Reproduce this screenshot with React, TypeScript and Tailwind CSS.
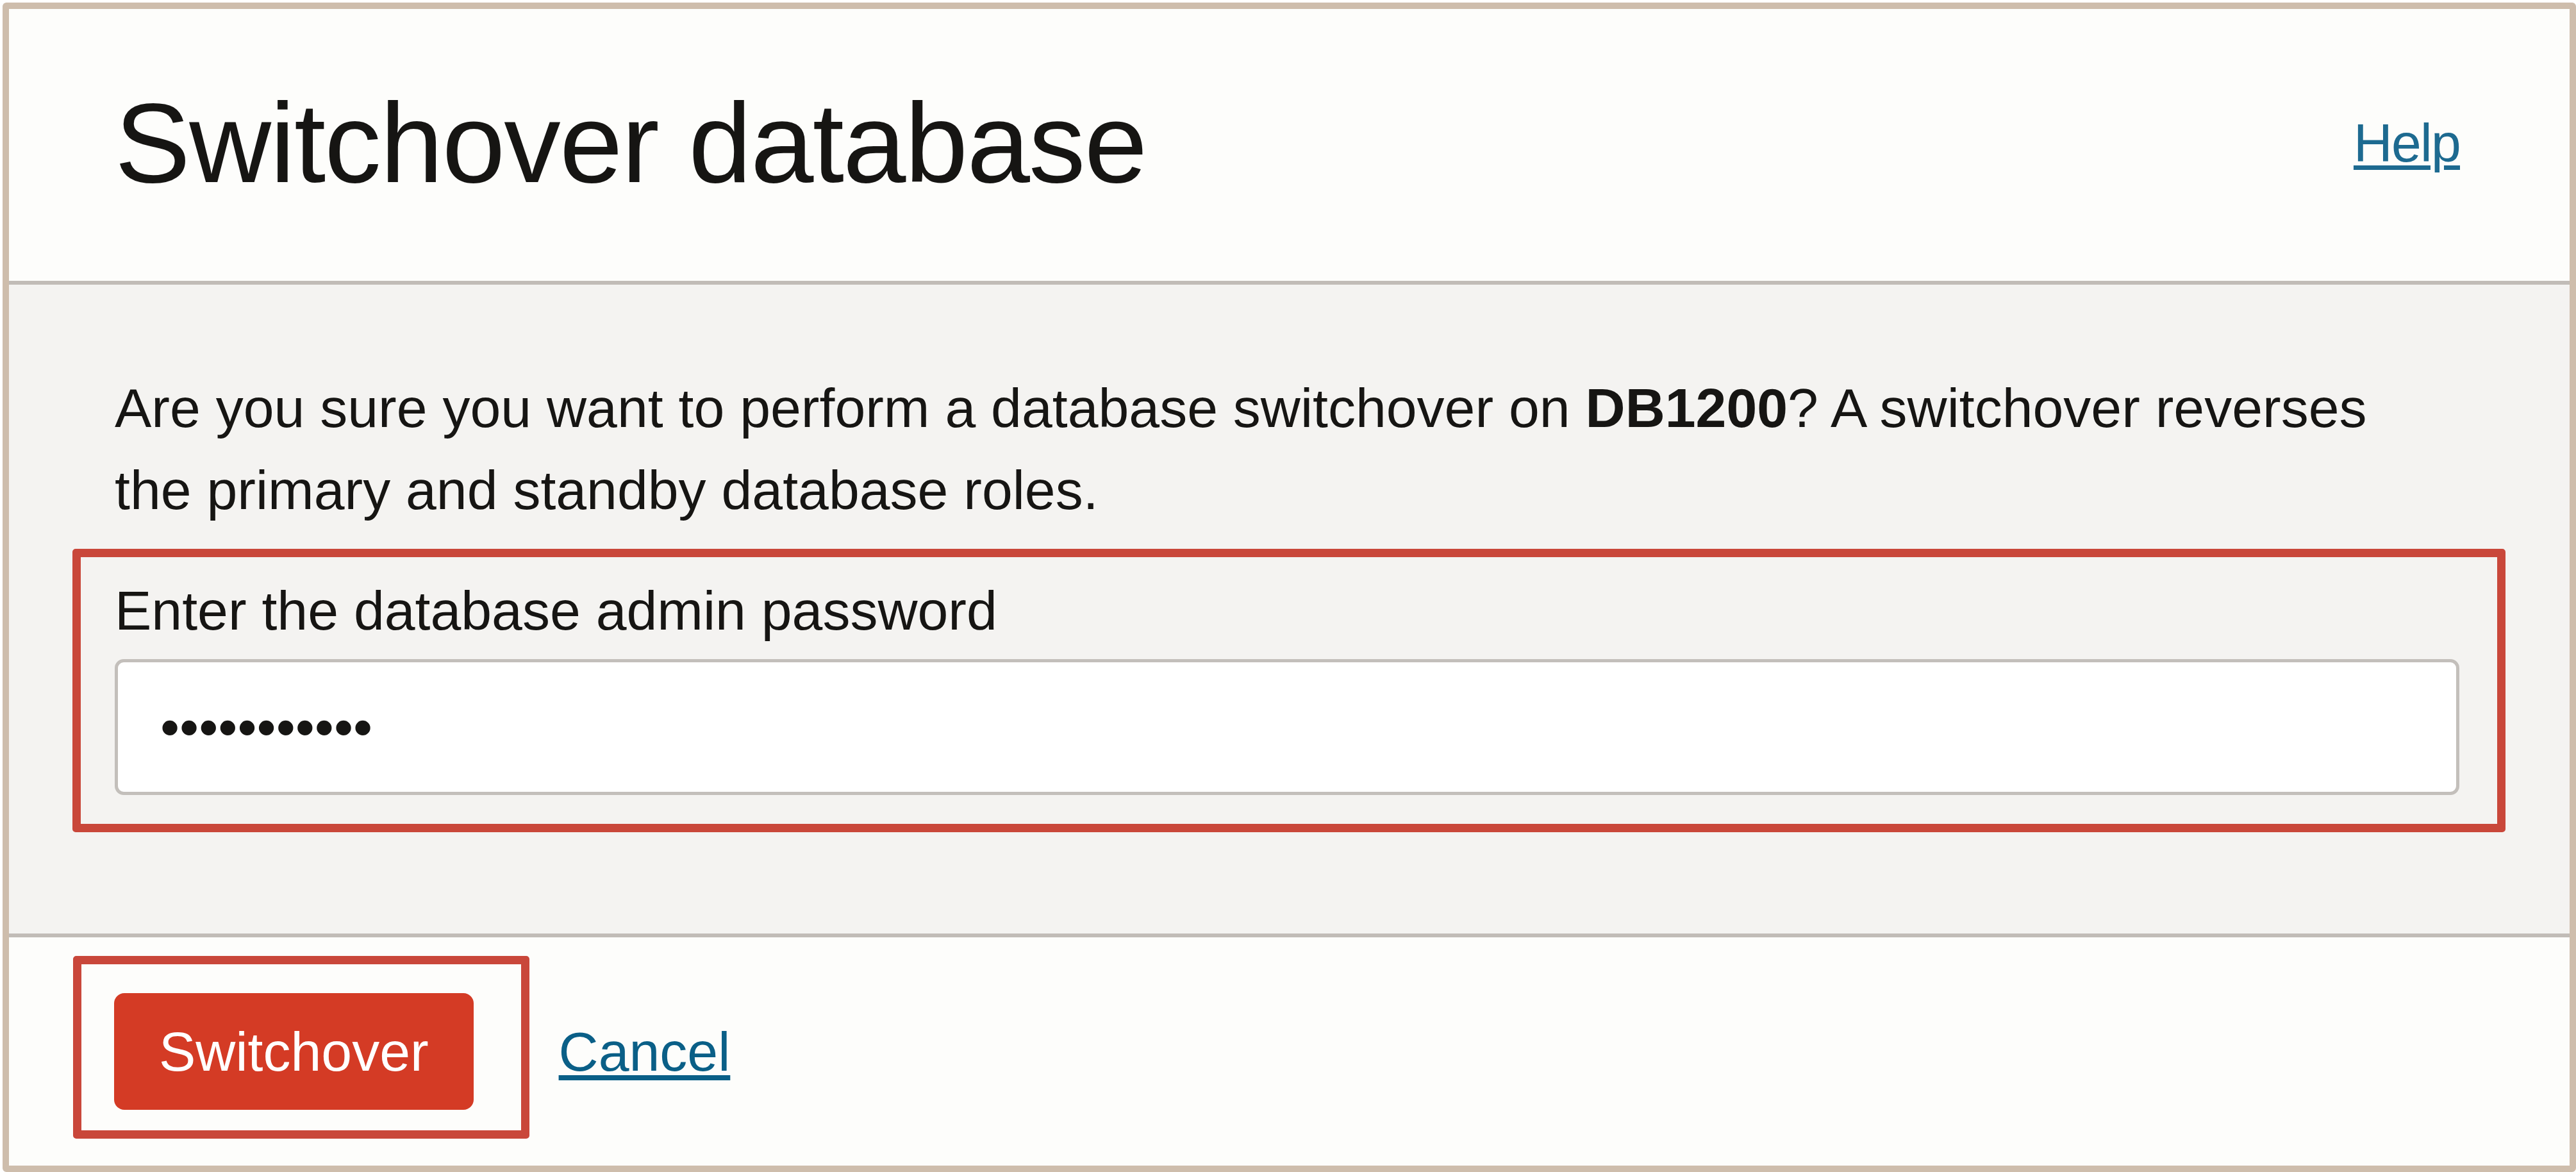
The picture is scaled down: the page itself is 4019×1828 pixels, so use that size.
import { useState } from 'react';

// Red annotation frame drawn over a region of the dialog
const Callout = ({ className }: { className: string }) => (
  <span className={`pointer-events-none absolute border-[13px] border-[#c9473a] rounded-[5px] ${className}`} />
);

export default function App() {
  const [password, setPassword] = useState('abcdefghijk');

  return (
    <div className="min-h-screen bg-white pl-[4px] pt-[4px] font-['Liberation_Sans',Arial,sans-serif] text-[#161513]">
      <div className="flex h-[1824px] flex-col overflow-hidden rounded-[6px] border-[10px] border-[#cebdac] bg-[#fdfdfb]">
        {/* header */}
        <div className="flex h-[430px] shrink-0 items-center justify-between border-b-[6px] border-[#c1bcb7] pb-[6px] pl-[165px] pr-[171px]">
          <h1 className="text-[177px] leading-none tracking-[-0.01em] font-normal">Switchover database</h1>
          <a
            href="#"
            className="text-[84px] leading-none tracking-[-0.02em] text-[#1d6a90] underline decoration-[7px] underline-offset-[6px]"
          >
            Help
          </a>
        </div>

        {/* body */}
        <div className="shrink-0 border-b-[6px] border-[#c1bcb7] bg-[#f4f3f1] pb-[216px] pl-[165px] pr-[172px] pt-[128px]">
          <p className="max-w-[3600px] text-[86px] leading-[128px]">
            Are you sure you want to perform a database switchover on <strong className="font-bold">DB1200</strong>? A
            switchover reverses the primary and standby database roles.
          </p>

          <div className="relative mt-[60px]">
            <Callout className="-bottom-[58px] -left-[66px] -right-[72px] -top-[32px]" />
            <label htmlFor="admin-pw" className="block text-[86px] leading-[128px]">
              Enter the database admin password
            </label>
            <input
              id="admin-pw"
              type="password"
              value={password}
              onChange={(e) => setPassword(e.target.value)}
              className="mt-[12px] block h-[212px] w-full rounded-[14px] border-[5px] border-[#c3bfbb] bg-white pl-[66px] text-[86px] text-[#161513] outline-none"
            />
          </div>
        </div>

        {/* footer */}
        <div className="flex flex-1 items-center pl-[164px]">
          <div className="relative">
            <Callout className="-bottom-[45px] -left-[64px] -right-[87px] -top-[58px]" />
            <button className="h-[182px] rounded-[16px] bg-[#d43b25] px-[70px] text-[86px] leading-none text-white">
              Switchover
            </button>
          </div>
          <a
            href="#"
            className="ml-[133px] text-[86px] leading-none text-[#0a5f87] underline decoration-[8px] underline-offset-[7px]"
          >
            Cancel
          </a>
        </div>
      </div>
    </div>
  );
}
